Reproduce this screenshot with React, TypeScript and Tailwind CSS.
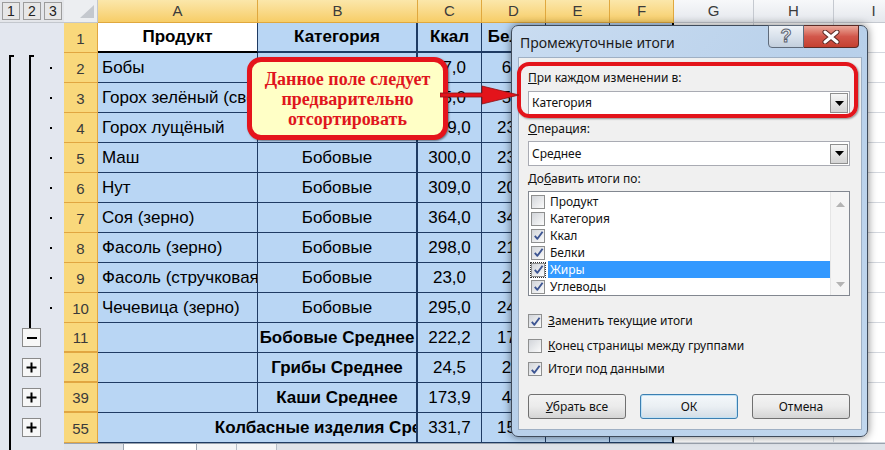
import React from "react";

type Kind = "detail" | "minus" | "plus";
type Row = {
  n: string;
  a: string;
  b: string;
  c: string;
  d: string;
  e: string;
  f: string;
  kind: Kind;
  first?: boolean;
  total?: boolean;
  thick?: boolean;
  wide?: boolean;
};

const rows: Row[] = [
  { n: "2", a: "Бобы", b: "Бобовые", c: "57,0", d: "6,0", e: "0,1", f: "8,3", kind: "detail", first: true },
  { n: "3", a: "Горох зелёный (свежий)", b: "Бобовые", c: "55,0", d: "5,0", e: "0,2", f: "8,3", kind: "detail" },
  { n: "4", a: "Горох лущёный", b: "Бобовые", c: "299,0", d: "23,0", e: "1,6", f: "48,1", kind: "detail" },
  { n: "5", a: "Маш", b: "Бобовые", c: "300,0", d: "23,5", e: "2,0", f: "46,0", kind: "detail" },
  { n: "6", a: "Нут", b: "Бобовые", c: "309,0", d: "20,1", e: "4,3", f: "46,2", kind: "detail" },
  { n: "7", a: "Соя (зерно)", b: "Бобовые", c: "364,0", d: "34,9", e: "17,3", f: "17,3", kind: "detail" },
  { n: "8", a: "Фасоль (зерно)", b: "Бобовые", c: "298,0", d: "21,0", e: "2,0", f: "47,0", kind: "detail" },
  { n: "9", a: "Фасоль (стручковая)", b: "Бобовые", c: "23,0", d: "2,5", e: "0,3", f: "3,0", kind: "detail" },
  { n: "10", a: "Чечевица (зерно)", b: "Бобовые", c: "295,0", d: "24,0", e: "1,5", f: "46,3", kind: "detail" },
  { n: "11", a: "", b: "Бобовые Среднее", c: "222,2", d: "17,7", e: "3,3", f: "30,1", kind: "minus", total: true, thick: true },
  { n: "28", a: "", b: "Грибы Среднее", c: "24,5", d: "2,9", e: "0,7", f: "1,6", kind: "plus", total: true, thick: true },
  { n: "39", a: "", b: "Каши Среднее", c: "173,9", d: "4,9", e: "1,8", f: "35,6", kind: "plus", total: true, thick: true },
  { n: "55", a: "", b: "Колбасные изделия Среднее", c: "331,7", d: "15,3", e: "28,9", f: "1,1", kind: "plus", total: true, wide: true },
];

const listItems = [
  { t: "Продукт", on: false },
  { t: "Категория", on: false },
  { t: "Ккал", on: true },
  { t: "Белки", on: true },
  { t: "Жиры", on: true, sel: true },
  { t: "Углеводы", on: true },
];

function OutlineBox({ sign }: { sign: "-" | "+" }) {
  return (
    <div className="ml-[2px] flex h-[19px] w-[19px] items-center justify-center border border-[#8a8a8a] bg-[#f7f7f7]">
      {sign === "-" ? (
        <div className="h-[2px] w-[10px] bg-black" />
      ) : (
        <svg width="11" height="11" viewBox="0 0 11 11">
          <path d="M5.5 0.5v10M0.5 5.5h10" stroke="#000" strokeWidth="2" />
        </svg>
      )}
    </div>
  );
}

function Outline({ row }: { row: Row }) {
  const line = row.first
    ? "ml-[9px] mt-[2px] h-[28px] w-[5px] border-l-2 border-t-2 border-black"
    : "ml-[9px] h-full w-[5px] border-l-2 border-black";
  return (
    <div className="flex h-full w-[64px] shrink-0 bg-[#e3e7ef]">
      <div className="h-full w-[20px]">
        <div className={line} />
      </div>
      <div className="h-full w-[22px]">
        {row.kind === "detail" && <div className={line} />}
        {row.kind === "minus" && (
          <>
            <div className="ml-[9px] h-[5px] border-l-2 border-black" />
            <OutlineBox sign="-" />
          </>
        )}
        {row.kind === "plus" && (
          <div className="pt-[5px]">
            <OutlineBox sign="+" />
          </div>
        )}
      </div>
      <div className="h-full flex-1">
        {row.kind === "detail" && <div className="ml-[8px] mt-[14px] h-[2px] w-[2px] bg-black" />}
      </div>
    </div>
  );
}

function RowHead({ n, thick }: { n: string; thick?: boolean }) {
  return (
    <div
      className={`flex w-[34px] shrink-0 items-center justify-center border-r border-[#e1a641] bg-[#f9d87b] pt-[3px] text-[15px] text-[#3a3a3a] ${
        thick ? "border-b-2" : "border-b"
      }`}
    >
      {n}
    </div>
  );
}

function GrayCells() {
  return (
    <>
      <div className="w-[80px] shrink-0 border-b border-r border-[#d4d8df] bg-white" />
      <div className="w-[80px] shrink-0 border-b border-r border-[#d4d8df] bg-white" />
      <div className="w-[80px] shrink-0 border-b border-r border-[#d4d8df] bg-white" />
    </>
  );
}

function DataRow({ row }: { row: Row }) {
  const num = "flex w-[64px] shrink-0 items-center justify-center border-b border-r border-[#1f3b63] bg-[#b9d6f4]";
  return (
    <div className="flex h-[30px]">
      <Outline row={row} />
      <RowHead n={row.n} thick={row.thick} />
      {row.wide ? (
        <div className="flex w-[320px] shrink-0 overflow-hidden border-b border-r-2 border-[#1f3b63] bg-[#b9d6f4]">
          <div className="ml-[160px] flex w-[160px] shrink-0 items-center justify-center whitespace-nowrap font-bold">
            {row.b}
          </div>
        </div>
      ) : (
        <>
          <div className="flex w-[160px] shrink-0 items-center overflow-hidden whitespace-nowrap border-b border-r border-[#1f3b63] bg-[#b9d6f4] px-[4px]">
            {row.a}
          </div>
          <div
            className={`flex w-[160px] shrink-0 items-center justify-center overflow-hidden whitespace-nowrap border-b border-r-2 border-[#1f3b63] bg-[#b9d6f4] ${
              row.total ? "font-bold" : ""
            }`}
          >
            {row.b}
          </div>
        </>
      )}
      <div className={num}>{row.c}</div>
      <div className={num}>{row.d}</div>
      <div className={num}>{row.e}</div>
      <div className="flex w-[64px] shrink-0 items-center justify-center border-b border-r-2 border-[#1f3b63] border-r-black bg-[#b9d6f4]">
        {row.f}
      </div>
      <GrayCells />
    </div>
  );
}

function Check({ on, focus }: { on: boolean; focus?: boolean }) {
  return (
    <div className={focus ? "outline outline-1 outline-dotted outline-[#333]" : ""}>
      <div className="flex h-[14px] w-[14px] shrink-0 items-center justify-center border border-[#8e8f8f] bg-gradient-to-br from-[#d2d5da] to-[#fbfbfb]">
        {on && (
          <svg width="11" height="11" viewBox="0 0 11 11">
            <path d="M1.8 5.8 L4.4 8.8 L9.6 1.8" stroke="#3d5592" strokeWidth="1.9" fill="none" strokeLinejoin="round" />
          </svg>
        )}
      </div>
    </div>
  );
}

function DropArrow() {
  return (
    <div className="mr-[1px] flex h-[20px] w-[18px] items-center justify-center border border-[#8f8f8f] bg-gradient-to-b from-[#f6f6f6] to-[#d4d4d4]">
      <svg width="9" height="5" viewBox="0 0 9 5">
        <path d="M0 0h9L4.5 5z" fill="#000" />
      </svg>
    </div>
  );
}

function Combo({ value, h }: { value: string; h: string }) {
  return (
    <div className={`flex w-[322px] items-center border border-[#a9abb3] bg-white ${h}`}>
      <span className="flex-1 pl-[3px]">{value}</span>
      <DropArrow />
    </div>
  );
}

function Btn({ children, def }: { children: React.ReactNode; def?: boolean }) {
  return (
    <div
      className={`flex h-[25px] w-[98px] items-center justify-center rounded-[3px] border bg-gradient-to-b ${
        def
          ? "border-[#3c7fb1] from-[#f4f8fb] via-[#eaeff3] to-[#d3dde6] shadow-[inset_0_0_0_1px_#bfe1f5]"
          : "border-[#707070] from-[#f3f3f3] via-[#ebebeb] to-[#d5d5d5]"
      }`}
    >
      {children}
    </div>
  );
}

export default function App() {
  const yellowHead =
    "flex shrink-0 items-center justify-center border-b border-r border-[#e0a83e] bg-gradient-to-b from-[#fbe7aa] to-[#f7cd66] text-[15px] text-[#3b3b3b]";
  const grayHead =
    "flex w-[80px] shrink-0 items-center justify-center border-b border-r border-[#c5c9d0] bg-gradient-to-b from-[#f7f8fa] to-[#e5e8ed] text-[15px] text-[#3b3b3b]";
  const head1 = "flex shrink-0 items-center justify-center border-b-2 border-r border-[#1f3b63] bg-[#b9d6f4] font-bold";

  return (
    <div className="relative h-[450px] w-[885px] overflow-hidden bg-white font-['Liberation_Sans',Arial,sans-serif] text-[17px] text-black">
      {/* column headers */}
      <div className="flex h-[23px]">
        <div className="flex w-[64px] shrink-0 items-start gap-[3px] border-b border-[#c3c7cd] bg-[#e4e6ea] pl-[2px] pt-[2px]">
          {["1", "2", "3"].map((n) => (
            <div
              key={n}
              className="flex h-[18px] w-[18px] items-center justify-center border border-[#9c9c9c] bg-[#e7e7e7] text-[14px] text-[#222]"
            >
              {n}
            </div>
          ))}
        </div>
        <div className="flex w-[34px] shrink-0 items-end justify-end border-b border-r border-[#c3c7cd] bg-[#eceef1] pb-[4px] pr-[3px]">
          <svg width="14" height="13" viewBox="0 0 14 13">
            <path d="M14 0V13H0z" fill="#c4c8ce" />
          </svg>
        </div>
        <div className={`${yellowHead} w-[160px]`}>A</div>
        <div className={`${yellowHead} w-[160px]`}>B</div>
        <div className={`${yellowHead} w-[64px]`}>C</div>
        <div className={`${yellowHead} w-[64px]`}>D</div>
        <div className={`${yellowHead} w-[64px]`}>E</div>
        <div className={`${yellowHead} w-[64px]`}>F</div>
        <div className={grayHead}>G</div>
        <div className={grayHead}>H</div>
        <div className={grayHead}>I</div>
      </div>

      {/* row 1 */}
      <div className="flex h-[30px]">
        <div className="w-[64px] shrink-0 bg-[#e3e7ef]" />
        <RowHead n="1" />
        <div className="flex w-[160px] shrink-0 items-center justify-center border-b-2 border-r border-black border-r-[#1f3b63] bg-white font-bold">
          Продукт
        </div>
        <div className={`${head1} w-[160px] border-r-2`}>Категория</div>
        <div className={`${head1} w-[64px]`}>Ккал</div>
        <div className={`${head1} w-[64px]`}>Белки</div>
        <div className={`${head1} w-[64px]`}>Жиры</div>
        <div className={`${head1} w-[64px] border-r-2 border-r-black`}>Углеводы</div>
        <GrayCells />
      </div>

      {rows.map((r) => (
        <DataRow key={r.n} row={r} />
      ))}

      {/* sheet tab strip */}
      <div className="flex h-[7px]">
        <div className="w-[64px] shrink-0 bg-[#e3e7ef]">
          <div className="ml-[9px] h-full border-l-2 border-black" />
        </div>
        <div className="flex flex-1 border-t border-[#9aa3ae] bg-[#dfe3e9]">
          <div className="ml-[59px] w-[74px] border-x border-[#9aa3ae] bg-white" />
          <div className="w-[40px] border-r border-[#b5bcc6] bg-[#f3f4f6]" />
          <div className="w-[40px] border-r border-[#b5bcc6] bg-[#f3f4f6]" />
        </div>
      </div>

      {/* callout */}
      <div className="absolute left-[247px] top-[57px] flex h-[83px] w-[201px] flex-col items-center justify-center rounded-[14px] border-[5px] border-[#e5141c] bg-[#ffffc6] font-['Liberation_Serif','Times_New_Roman',serif] text-[18px] font-bold leading-[20px] text-[#e0161d] shadow-[1px_1px_2px_rgba(0,0,0,0.45)]">
        <span>Данное поле следует</span>
        <span>предварительно</span>
        <span>отсортировать</span>
      </div>

      {/* dialog */}
      <div className="absolute left-[511px] top-[25px] flex h-[412px] w-[357px] flex-col rounded-[7px] border border-[#3f4b5b] bg-gradient-to-br from-[#c9dcf1] via-[#b8d0ea] to-[#c1d7ee] font-['Segoe_UI','Noto_Sans',sans-serif] text-[12px] text-[#111] shadow-[0_0_8px_rgba(0,0,0,0.5)]">
        <div className="flex h-[31px] shrink-0 items-start justify-between">
          <div className="pl-[8px] pt-[6px] text-[14px] text-[#1b1b1b]">Промежуточные итоги</div>
          <div className="mr-[8px] mt-[-1px] flex">
            <div className="flex h-[23px] w-[36px] items-center justify-center rounded-bl-[4px] border border-[#5f6b7b] bg-gradient-to-b from-[#eef2f7] via-[#d9e2ec] to-[#c3cfdd] font-['Liberation_Sans',sans-serif] text-[18px] font-bold text-[#eef1f5] [-webkit-text-stroke:1px_#5b6370]">
              ?
            </div>
            <div className="flex h-[23px] w-[55px] items-center justify-center rounded-br-[4px] border border-l-0 border-[#5a2a25] bg-gradient-to-b from-[#e9a89b] via-[#d2574b] to-[#c4402f]">
              <svg width="18" height="14" viewBox="0 0 18 14">
                <path d="M3 2l12 10M15 2L3 12" stroke="#5a2a25" strokeWidth="5" strokeLinecap="round" />
                <path d="M3 2l12 10M15 2L3 12" stroke="#fff" strokeWidth="3" strokeLinecap="round" />
              </svg>
            </div>
          </div>
        </div>

        <div className="relative mb-[6px] ml-[6px] mr-[5px] flex-1 border border-[#9fb0c4] bg-[#f0f0f0] px-[9px] pt-[11px]">
          <div className="absolute left-[-2px] top-[4px] h-[56px] w-[341px] rounded-[12px] border-4 border-[#e3141b] shadow-[1px_1px_2px_rgba(0,0,0,0.4)]" />

          <div className="flex h-[18px] items-center">
            <span>
              <span className="underline">П</span>ри каждом изменении в:
            </span>
          </div>
          <div className="mt-[4px]">
            <Combo value="Категория" h="h-[24px]" />
          </div>

          <div className="mt-[5px] flex h-[18px] items-center">
            <span>
              <span className="underline">О</span>перация:
            </span>
          </div>
          <div className="mt-[3px]">
            <Combo value="Среднее" h="h-[25px]" />
          </div>

          <div className="mt-[4px] flex h-[18px] items-center">
            <span>
              До<span className="underline">б</span>авить итоги по:
            </span>
          </div>
          <div className="mt-[3px] flex h-[105px] w-[322px] border border-[#828790] bg-white">
            <div className="flex-1 pl-[2px] pt-[1px]">
              {listItems.map((it) => (
                <div key={it.t} className="flex h-[17px] items-center">
                  <Check on={it.on} focus={it.sel} />
                  <div
                    className={
                      it.sel
                        ? "ml-[3px] flex h-full flex-1 items-center bg-[#3399ff] pl-[2px] text-white"
                        : "ml-[3px] flex h-full flex-1 items-center pl-[2px]"
                    }
                  >
                    {it.t}
                  </div>
                </div>
              ))}
            </div>
            <div className="flex w-[19px] flex-col items-center justify-between border-l border-[#e6e6e6] bg-[#f5f5f5] pb-[8px] pt-[10px]">
              <svg width="9" height="5" viewBox="0 0 9 5">
                <path d="M0 5h9L4.5 0z" fill="#b4b4b4" />
              </svg>
              <svg width="9" height="5" viewBox="0 0 9 5">
                <path d="M0 0h9L4.5 5z" fill="#b4b4b4" />
              </svg>
            </div>
          </div>

          <div className="mt-[15px] flex h-[20px] items-center gap-[6px]">
            <Check on />
            <span>
              <span className="underline">З</span>аменить текущие итоги
            </span>
          </div>
          <div className="mt-[5px] flex h-[20px] items-center gap-[6px]">
            <Check on={false} />
            <span>
              <span className="underline">К</span>онец страницы между группами
            </span>
          </div>
          <div className="mt-[3px] flex h-[20px] items-center gap-[6px]">
            <Check on />
            <span>
              Ито<span className="underline">г</span>и под данными
            </span>
          </div>

          <div className="mt-[15px] flex gap-[14px]">
            <Btn>
              <span>
                <span className="underline">У</span>брать все
              </span>
            </Btn>
            <Btn def>ОК</Btn>
            <Btn>Отмена</Btn>
          </div>
        </div>
      </div>

      {/* arrow from callout to dialog */}
      <svg className="absolute left-[440px] top-[83px]" width="82" height="24" viewBox="0 0 82 24">
        <path d="M0 10h42V3l37 9-37 9v-7H0z" fill="#e3141b" stroke="#8a1418" strokeWidth="0.8" />
      </svg>
    </div>
  );
}
